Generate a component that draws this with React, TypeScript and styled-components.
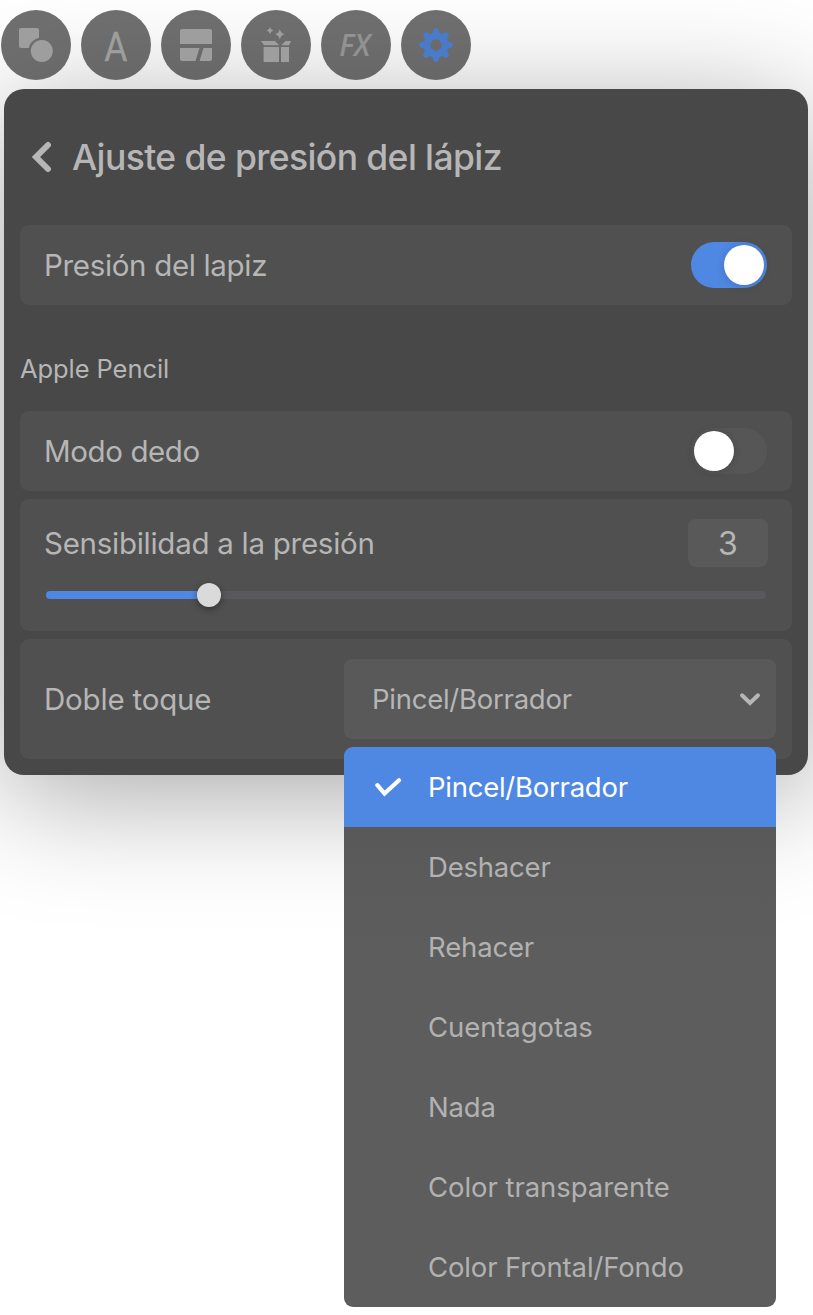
import React, { useState } from "react";
import styled, { createGlobalStyle, css } from "styled-components";

const colors = {
  accent: "#4f88e2",
  panel: "#484848",
  card: "#505050",
  control: "#595959",
  text: "#b6b6b6",
  icon: "#9e9e9e",
};

const GlobalStyle = createGlobalStyle`
  * { box-sizing: border-box; }
  html, body { background: #fff; }
  body {
    margin: 0;
    overflow: hidden;
    font-family: Inter, "Liberation Sans", sans-serif;
    color: ${colors.text};
  }
  button { font: inherit; color: inherit; border: 0; padding: 0; background: none; }
`;

const Screen = styled.main`
  width: 813px;
  height: 1315px;
  overflow: hidden;
  display: flex;
  flex-direction: column;
  padding: 10px 5px 0 1px;
`;

const Toolbar = styled.nav`
  position: relative;
  z-index: 1;
  display: flex;
  gap: 10px;
  margin-bottom: 9px;
`;

const ToolButton = styled.button`
  width: 70px;
  height: 70px;
  border-radius: 50%;
  background: rgba(43, 43, 43, 0.68);
  color: ${colors.icon};
  display: flex;
  align-items: center;
  justify-content: center;

  svg { display: block; width: 70px; height: 70px; }
`;

const Letter = styled.span<{ $fx?: boolean }>`
  display: block;
  ${({ $fx }) =>
    $fx
      ? css`
          font: italic 600 30.5px/1 "Open Sans", sans-serif;
          transform: translate(-1.5px, -1px) scaleX(0.95);
          color: #929292;
        `
      : css`
          font: 400 41px/1 Lato, sans-serif;
          -webkit-text-stroke: 0.5px currentColor;
          transform: translateY(-0.5px) scaleX(0.8);
        `}
`;

const Panel = styled.section`
  width: 804px;
  height: 686px;
  margin-left: 3px;
  padding: 0 16px;
  border-radius: 20px;
  background: ${colors.panel};
  box-shadow: 0 20px 120px rgba(0, 0, 0, 0.35);
`;

const Header = styled.header`
  height: 136px;
  display: flex;
  align-items: center;
  gap: 20px;
  padding-left: 11px;

  svg { display: block; flex: none; }
`;

const Title = styled.h1`
  margin: 0;
  font-size: 35.5px;
  font-weight: 500;
  letter-spacing: -0.6px;
  white-space: nowrap;
`;

const SectionTitle = styled.h2`
  height: 106px;
  margin: 0;
  padding-top: 20px;
  display: flex;
  align-items: center;
  font-size: 25.5px;
  font-weight: 400;
  letter-spacing: -0.08px;
`;

const CardStack = styled.div`
  display: flex;
  flex-direction: column;
  gap: 8px;
`;

const Card = styled.div<{ $height: number }>`
  height: ${({ $height }) => $height}px;
  padding: 0 24px;
  border-radius: 9px;
  background: ${colors.card};
`;

const Row = styled.div<{ $height: number }>`
  height: ${({ $height }) => $height}px;
  display: flex;
  align-items: center;
  justify-content: space-between;
`;

const Label = styled.span<{ $spacing?: number }>`
  font-size: 29.5px;
  letter-spacing: ${({ $spacing = 0 }) => $spacing}px;
  white-space: nowrap;
`;

const Switch = styled.button<{ $on: boolean }>`
  width: 76px;
  height: 46px;
  margin-right: 1px;
  padding: 0 3px;
  border-radius: 23px;
  display: flex;
  align-items: center;
  justify-content: ${({ $on }) => ($on ? "flex-end" : "flex-start")};
  background: ${({ $on }) => ($on ? colors.accent : "#565656")};
`;

const Knob = styled.span`
  width: 40px;
  height: 40px;
  border-radius: 50%;
  background: #fff;
  box-shadow: 0 1px 8px rgba(0, 0, 0, 0.16);
`;

const ValueBox = styled.output`
  width: 80px;
  height: 48px;
  border-radius: 8px;
  background: ${colors.control};
  display: flex;
  align-items: center;
  justify-content: center;
  font-size: 32px;
`;

const Slider = styled.div`
  height: 24px;
  margin: -4px 2px 0;
  display: flex;
  align-items: center;
`;

const SliderFill = styled.div`
  height: 8px;
  border-radius: 4px 0 0 4px;
  background: ${colors.accent};
`;

const SliderThumb = styled.div`
  flex: none;
  width: 24px;
  height: 24px;
  margin: 0 -12px;
  z-index: 1;
  border-radius: 50%;
  background: #dadada;
  box-shadow: 0 2px 7px rgba(0, 0, 0, 0.4);
`;

const SliderRest = styled.div`
  flex: 1;
  height: 8px;
  border-radius: 0 4px 4px 0;
  background: #59595b;
`;

const Dropdown = styled.div`
  position: relative;
  width: 432px;
  margin-right: -8px;
  font-size: 27.5px;
`;

const Select = styled.button`
  width: 100%;
  height: 80px;
  padding: 0 15px 0 28px;
  border-radius: 8px;
  background: ${colors.control};
  display: flex;
  align-items: center;
  justify-content: space-between;

  svg { display: block; }
`;

const Menu = styled.ul`
  position: absolute;
  top: 88px;
  left: 0;
  width: 100%;
  margin: 0;
  padding: 0;
  list-style: none;
  overflow: hidden;
  border-radius: 9px;
  background: linear-gradient(#595959 80px, #5d5d5d 200px);
`;

const Option = styled.li<{ $selected: boolean }>`
  height: 80px;
  padding-left: 31px;
  display: flex;
  align-items: center;
  color: ${({ $selected }) => ($selected ? "#fff" : "#b2b2b2")};
  background: ${({ $selected }) => ($selected ? colors.accent : "transparent")};
`;

const CheckSlot = styled.span`
  width: 53px;
  height: 20px;

  svg { display: block; }
`;

const OptionText = styled.span<{ $spacing?: number }>`
  letter-spacing: ${({ $spacing = 0 }) => $spacing}px;
  white-space: nowrap;
`;

const ShapesIcon = () => (
  <svg viewBox="0 0 70 70" fill="currentColor">
    <mask id="shape-gap">
      <rect width="70" height="70" fill="#fff" />
      <circle cx="40.7" cy="41" r="13.3" fill="#000" />
    </mask>
    <rect x="18" y="18" width="20" height="20" rx="2" mask="url(#shape-gap)" />
    <circle cx="40.8" cy="41" r="11" />
  </svg>
);

const PanelsIcon = () => (
  <svg viewBox="0 0 70 70" fill="currentColor">
    <path d="M21 19h28a2 2 0 0 1 2 2v13H19V21a2 2 0 0 1 2-2Z" />
    <path d="M19 38h19.5l-4 13H21a2 2 0 0 1-2-2ZM42.5 38H51v11a2 2 0 0 1-2 2H38.5Z" />
  </svg>
);

const GiftIcon = () => (
  <svg viewBox="0 0 70 70" fill="currentColor">
    <path d="M22.6 37H38v15H22.6ZM40 37h8v15h-8ZM20 31h14l4 4.3H23ZM44.5 31H50l-2 4.3h-7.5Z" />
    <path d="M29 17q.7 3 3.3 3.6-2.6.7-3.3 3.6-.7-2.9-3.3-3.6Q28.300 20 29 17ZM38.800 19q1 4.200 4.700 5.300-3.700 1-4.700 5.200-1-4.200-4.700-5.200 3.700-1.100 4.700-5.300Z" />
  </svg>
);

// Eight blunt teeth traced as a flattened wave around the hub.
const gearOutline = Array.from({ length: 180 }, (_, i) => {
  const angle = (i * Math.PI) / 90;
  const wave = Math.tanh(1.3 * Math.cos(8 * angle)) / Math.tanh(1.3);
  const radius = 14.6 + 2.3 * wave;
  return `${(35 + radius * Math.cos(angle)).toFixed(2)} ${(35 + radius * Math.sin(angle)).toFixed(2)}`;
}).join("L");

const GearIcon = () => (
  <svg viewBox="0 0 70 70" fill="#4a7bc8" fillRule="evenodd">
    <path d={`M${gearOutline}ZM40.700 35a5.700 5.700 0 1 0-11.400 0a5.700 5.700 0 1 0 11.400 0Z`} />
  </svg>
);

const options = [
  { name: "Pincel/Borrador", spacing: -0.25 },
  { name: "Deshacer", spacing: -0.2 },
  { name: "Rehacer", spacing: -0.15 },
  { name: "Cuentagotas", spacing: -0.08 },
  { name: "Nada", spacing: -0.2 },
  { name: "Color transparente", spacing: -0.06 },
  { name: "Color Frontal/Fondo", spacing: -0.13 },
];

const sensitivity = 3;

export default function App() {
  const [pressure, setPressure] = useState(true);
  const [finger, setFinger] = useState(false);
  const [selected, setSelected] = useState("Pincel/Borrador");

  return (
    <Screen>
      <GlobalStyle />
      <Toolbar>
        <ToolButton><ShapesIcon /></ToolButton>
        <ToolButton><Letter>A</Letter></ToolButton>
        <ToolButton><PanelsIcon /></ToolButton>
        <ToolButton><GiftIcon /></ToolButton>
        <ToolButton><Letter $fx>FX</Letter></ToolButton>
        <ToolButton><GearIcon /></ToolButton>
      </Toolbar>
      <Panel>
        <Header>
          <svg width="21" height="32" viewBox="0 0 21 32" fill="none" stroke={colors.text} strokeWidth="6" strokeLinecap="round">
            <path d="M17 4 5 16l12 12" />
          </svg>
          <Title>Ajuste de presión del lápiz</Title>
        </Header>
        <Card $height={80}>
          <Row $height={80}>
            <Label $spacing={-0.33}>Presión del lapiz</Label>
            <Switch $on={pressure} onClick={() => setPressure(!pressure)}><Knob /></Switch>
          </Row>
        </Card>
        <SectionTitle>Apple Pencil</SectionTitle>
        <CardStack>
          <Card $height={80}>
            <Row $height={80}>
              <Label $spacing={-0.4}>Modo dedo</Label>
              <Switch $on={finger} onClick={() => setFinger(!finger)}><Knob /></Switch>
            </Row>
          </Card>
          <Card $height={132}>
            <Row $height={88}>
              <Label $spacing={-0.27}>Sensibilidad a la presión</Label>
              <ValueBox>{sensitivity}</ValueBox>
            </Row>
            <Slider>
              <SliderFill style={{ width: `${((sensitivity - 0.735) / 10) * 100}%` }} />
              <SliderThumb />
              <SliderRest />
            </Slider>
          </Card>
          <Card $height={120}>
            <Row $height={120}>
              <Label $spacing={-0.2}>Doble toque</Label>
              <Dropdown>
                <Select>
                  <OptionText $spacing={-0.25}>{selected}</OptionText>
                  <svg width="22" height="16" viewBox="0 0 22 16" fill="none" stroke={colors.text} strokeWidth="4" strokeLinecap="round">
                    <path d="m3 4.300 8 7.700 8-7.700" />
                  </svg>
                </Select>
                <Menu>
                  {options.map(({ name, spacing }) => (
                    <Option key={name} $selected={name === selected} onClick={() => setSelected(name)}>
                      <CheckSlot>
                        {name === selected && (
                          <svg width="27" height="20" viewBox="0 0 27 20" fill="none" stroke="#fff" strokeWidth="4.200" strokeLinecap="round">
                            <path d="m2.400 8.200 7.100 8.300L24 3.300" />
                          </svg>
                        )}
                      </CheckSlot>
                      <OptionText $spacing={spacing}>{name}</OptionText>
                    </Option>
                  ))}
                </Menu>
              </Dropdown>
            </Row>
          </Card>
        </CardStack>
      </Panel>
    </Screen>
  );
}
